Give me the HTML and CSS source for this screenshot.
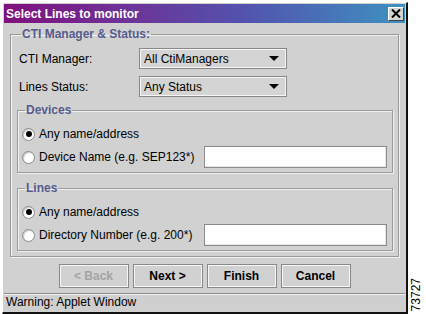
FILE: index.html
```html
<!DOCTYPE html>
<html lang="en">
<head>
    <meta charset="UTF-8">
    <title>Select Lines to monitor</title>
    <link rel="stylesheet" href="styles.css">
</head>
<body>

<div class="window">
    <div class="title-bar">
        <span class="title">Select Lines to monitor</span>
        <span class="close-btn">
            <svg width="10" height="9" viewBox="0 0 10 9">
                <path d="M1 0.5 L9 8.5 M9 0.5 L1 8.5" stroke="#000" stroke-width="2"/>
            </svg>
        </span>
    </div>

    <div class="content">
        <fieldset class="group main-group">
            <legend>CTI Manager &amp; Status:</legend>
            <div class="field-row">
                <label>CTI Manager:</label>
                <div class="combo"><span>All CtiManagers</span><i class="arrow"></i></div>
            </div>
            <div class="field-row">
                <label>Lines Status:</label>
                <div class="combo"><span>Any Status</span><i class="arrow"></i></div>
            </div>

            <fieldset class="group sub-group">
                <legend>Devices</legend>
                <div class="radio-row">
                    <span class="radio checked"></span>
                    <span class="radio-label">Any name/address</span>
                </div>
                <div class="radio-row">
                    <span class="radio"></span>
                    <span class="radio-label">Device Name (e.g. SEP123*)</span>
                    <input type="text" class="text-input">
                </div>
            </fieldset>

            <fieldset class="group sub-group lines-group">
                <legend>Lines</legend>
                <div class="radio-row">
                    <span class="radio checked"></span>
                    <span class="radio-label">Any name/address</span>
                </div>
                <div class="radio-row">
                    <span class="radio"></span>
                    <span class="radio-label">Directory Number (e.g. 200*)</span>
                    <input type="text" class="text-input">
                </div>
            </fieldset>
        </fieldset>

        <div class="buttons">
            <button class="btn" disabled>&lt; Back</button>
            <button class="btn">Next &gt;</button>
            <button class="btn">Finish</button>
            <button class="btn">Cancel</button>
        </div>
    </div>

    <div class="status-bar">Warning: Applet Window</div>
</div>

<div class="side">
    <span class="fig-number">73727</span>
</div>

</body>
</html>
```

FILE: styles.css
```css
/* 全局 */
* {
    margin: 0;
    padding: 0;
    box-sizing: border-box;
}

body {
    width: 426px;
    height: 314px;
    background: #fff;
    font-family: 'Liberation Sans', Arial, sans-serif;
    font-size: 12px;
    color: #000;
    display: flex;
    overflow: hidden;
}

/* 窗口 */
.window {
    margin: 2px 0 0 2px;
    width: 406px;
    height: 312px;
    background: #d1d1d1;
    border-top: 1px solid #fff;
    border-left: 1px solid #fff;
    border-right: 2px solid #111;
    border-bottom: 2px solid #111;
    padding: 1px;
    display: flex;
    flex-direction: column;
}

.title-bar {
    height: 19px;
    display: flex;
    align-items: center;
    justify-content: space-between;
    background: linear-gradient(90deg, #80107e 0%, #6c3598 32%, #5450ad 58%, #4872b8 80%, #3d92bf 100%);
}

.title {
    color: #fff;
    font-weight: bold;
    font-size: 12px;
    padding-left: 2px;
}

.close-btn {
    width: 16px;
    height: 14px;
    margin-right: 1px;
    background: #d4d4d4;
    border-top: 1px solid #fff;
    border-left: 1px solid #fff;
    border-right: 1px solid #404040;
    border-bottom: 1px solid #404040;
    display: flex;
    align-items: center;
    justify-content: center;
}

.content {
    padding: 4px 6px 0 6px;
}

/* 分组框 */
.group {
    border: 1px solid #999;
    box-shadow: inset 1px 1px 0 #f2f2f2, 1px 1px 0 #f2f2f2;
    min-inline-size: 0;
}

.group legend {
    font-weight: bold;
    color: #565b8d;
    line-height: 14px;
    padding: 0 1px;
}

.main-group {
    padding: 7px 5px 5px 6px;
}

.main-group > legend {
    margin-left: 4px;
}

.field-row {
    display: flex;
    align-items: center;
    height: 21px;
    padding-left: 2px;
    margin-bottom: 7px;
}

.field-row label {
    width: 120px;
}

.combo {
    width: 148px;
    height: 21px;
    background: #d4d4d4;
    border: 1px solid #888;
    box-shadow: inset 1px 1px 0 #f6f6f6, inset -1px -1px 0 #f6f6f6;
    display: flex;
    align-items: center;
    justify-content: space-between;
    padding: 0 7px 0 4px;
}

.arrow {
    width: 0;
    height: 0;
    border-left: 5px solid transparent;
    border-right: 5px solid transparent;
    border-top: 5px solid #000;
}

.sub-group {
    margin-top: -1px;
    padding: 6px 5px 4px 4px;
}

.sub-group > legend {
    margin-left: 3px;
}

.lines-group {
    margin-top: 8px;
}

.radio-row {
    display: flex;
    align-items: center;
    height: 22px;
    margin-bottom: 1px;
}

.radio-row:last-child {
    margin-bottom: 0;
}

.radio {
    width: 13px;
    height: 13px;
    border-radius: 50%;
    border: 1px solid #8a8a8a;
    background: #fff;
    box-shadow: inset 1px 1px 1px #c8c8c8;
    margin-right: 4px;
    display: flex;
    align-items: center;
    justify-content: center;
}

.radio.checked::after {
    content: '';
    width: 6px;
    height: 6px;
    border-radius: 50%;
    background: #000;
}

.radio-label {
    flex: 1;
}

.text-input {
    width: 183px;
    height: 22px;
    background: #fff;
    border: 1px solid #8c8c8c;
    box-shadow: inset -1px -1px 0 #e6e6e6;
    outline: none;
}

/* 按钮 */
.buttons {
    display: flex;
    justify-content: center;
    gap: 4px;
    margin-top: 7px;
}

.btn {
    width: 70px;
    height: 24px;
    font-family: 'Liberation Sans', Arial, sans-serif;
    font-size: 12px;
    font-weight: bold;
    color: #000;
    background: #d1d1d1;
    border: 1px solid #888;
    box-shadow: inset 1px 1px 0 #f6f6f6, inset -1px -1px 0 #f6f6f6;
}

.btn:disabled {
    color: #a4a4a4;
}

/* 状态栏 */
.status-bar {
    margin-top: auto;
    height: 18px;
    line-height: 17px;
    padding-left: 2px;
    border-top: 1px solid #8a8a8a;
    box-shadow: inset 0 1px 0 #f4f4f4;
    background: #cfcfcf;
}

.side {
    flex: 1;
    display: flex;
    align-items: flex-end;
    padding: 0 0 3px 2px;
}

.fig-number {
    writing-mode: vertical-rl;
    transform: rotate(180deg);
    font-size: 12px;
    line-height: 12px;
}
```
